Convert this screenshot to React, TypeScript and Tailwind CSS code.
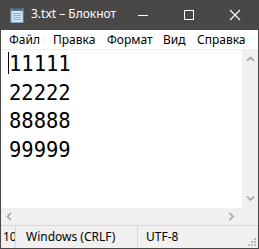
import React from 'react';

const ui = { fontFamily: '"Noto Sans", "Open Sans", sans-serif' };
const mono = { fontFamily: '"DejaVu Sans Mono", "Liberation Mono", monospace' };

function NotepadIcon() {
  return (
    <svg width="14" height="16" viewBox="0 0 14 16">
      <rect x="1" y="2" width="12" height="13.5" fill="#cfe6f7" stroke="#7fa9c9" strokeWidth="1" />
      <rect x="1" y="2" width="12" height="2" fill="#5b8fc0" />
      {[2.5, 4.5, 6.5, 8.5, 10.5].map((x) => (
        <rect key={x} x={x} y="0.5" width="1" height="3" fill="#4a4a4a" />
      ))}
      {[6.5, 8.5, 10.5, 12.5].map((y) => (
        <line key={y} x1="3" y1={y} x2="11" y2={y} stroke="#8fb5d4" strokeWidth="1" />
      ))}
    </svg>
  );
}

function Chevron({ dir }: { dir: 'up' | 'down' | 'left' | 'right' }) {
  const d = {
    up: 'M1 5 L4.5 1.5 L8 5',
    down: 'M1 1.5 L4.5 5 L8 1.5',
    left: 'M5 1 L1.5 4.5 L5 8',
    right: 'M1.5 1 L5 4.5 L1.5 8',
  }[dir];
  const horiz = dir === 'left' || dir === 'right';
  return (
    <svg width={horiz ? 7 : 9} height={horiz ? 9 : 7} viewBox={horiz ? '0 0 7 9' : '0 0 9 7'}>
      <path d={d} fill="none" stroke="#a3a3a3" strokeWidth="1.6" />
    </svg>
  );
}

export default function App(): React.JSX.Element {
  const lines = ['11111', '22222', '88888', '99999'];
  const menu = [
    ['Файл', 'w-[44px]'],
    ['Правка', 'w-[54px]'],
    ['Формат', 'w-[56px]'],
    ['Вид', 'w-[34px]'],
    ['Справка', 'w-auto'],
  ];
  return (
    <div className="w-[259px] h-[249px] flex flex-col bg-[#4a4847] border-x border-b border-[#4a4847] overflow-hidden" style={ui}>
      {/* title bar */}
      <div className="h-[30px] flex items-center text-white text-[12px] shrink-0">
        <div className="ml-[9px] w-[14px] h-[16px] mt-[-1px]">
          <NotepadIcon />
        </div>
        <span className="ml-[7px] mt-[-2px]">3.txt – Блокнот</span>
        <div className="ml-auto flex items-center">
          <div className="w-[46px] h-[30px] flex items-center justify-center">
            <div className="w-[10px] h-px bg-white mt-[1px]" />
          </div>
          <div className="w-[46px] h-[30px] flex items-center justify-center">
            <div className="w-[10px] h-[10px] border border-white mt-[-1px]" />
          </div>
          <div className="w-[46px] h-[30px] flex items-center justify-center">
            <svg width="12" height="12" viewBox="0 0 12 12" className="mt-[-1px]">
              <path d="M1 1 L11 11 M11 1 L1 11" stroke="#fff" strokeWidth="1.1" />
            </svg>
          </div>
        </div>
      </div>

      {/* menu bar */}
      <div className="h-[19px] bg-white flex items-center pl-[8px] text-[12px] text-black shrink-0">
        {menu.map(([label, w]) => (
          <span key={label} className={w}>
            {label}
          </span>
        ))}
      </div>
      <div className="h-px bg-[#f0f0f0] shrink-0" />

      {/* edit area */}
      <div className="flex h-[158px] shrink-0">
        <div className="flex-1 bg-white relative pl-[8px]">
          <div className="absolute left-[7px] top-[2px] w-px h-[22px] bg-black" />
          <div className="text-[20.5px] leading-[28.5px] text-black" style={mono}>
            {lines.map((l) => (
              <div key={l}>{l}</div>
            ))}
          </div>
        </div>
        <div className="w-[16px] bg-[#f0f0f0] flex flex-col items-center justify-between py-[6px]">
          <Chevron dir="up" />
          <Chevron dir="down" />
        </div>
      </div>

      {/* horizontal scrollbar */}
      <div className="h-[17px] bg-[#f0f0f0] flex items-center shrink-0">
        <div className="flex-1 flex items-center justify-between pl-[5px] pr-[7px]">
          <Chevron dir="left" />
          <Chevron dir="right" />
        </div>
        <div className="w-[16px]" />
      </div>
      <div className="h-px bg-[#d7d7d7] shrink-0" />

      {/* status bar */}
      <div className="flex-1 bg-[#f0f0f0] flex items-stretch text-[12px] text-black relative">
        <div className="w-[14px] pl-[2px] overflow-hidden whitespace-nowrap flex items-center">10</div>
        <div className="w-px bg-[#d7d7d7]" />
        <div className="w-[121px] pl-[10px] flex items-center whitespace-nowrap">Windows (CRLF)</div>
        <div className="w-px bg-[#d7d7d7]" />
        <div className="pl-[8px] flex items-center">UTF-8</div>
        <svg width="10" height="10" viewBox="0 0 10 10" className="absolute right-[1px] bottom-[1px]">
          {[
            [7, 1], [7, 4], [4, 4], [7, 7], [4, 7], [1, 7],
          ].map(([x, y]) => (
            <rect key={`${x}-${y}`} x={x} y={y} width="2" height="2" fill="#b8b8b8" />
          ))}
        </svg>
      </div>
    </div>
  );
}
